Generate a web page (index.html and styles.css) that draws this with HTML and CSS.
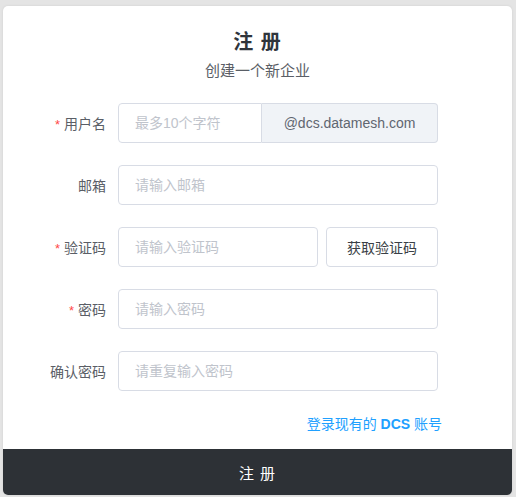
FILE: index.html
```html
<!DOCTYPE html>
<html lang="zh-CN">
<head>
<meta charset="utf-8">
<title>注册</title>
<link rel="stylesheet" href="styles.css">
</head>
<body>
<div class="card">
  <div class="head">
    <h1 class="title">注 册</h1>
    <p class="subtitle">创建一个新企业</p>
  </div>
  <form class="form">
    <div class="row">
      <label class="label"><span class="req">*</span>用户名</label>
      <div class="group">
        <input class="input input-left" placeholder="最多10个字符">
        <div class="addon">@dcs.datamesh.com</div>
      </div>
    </div>
    <div class="row">
      <label class="label">邮箱</label>
      <input class="input input-full" placeholder="请输入邮箱">
    </div>
    <div class="row">
      <label class="label"><span class="req">*</span>验证码</label>
      <div class="group gap">
        <input class="input input-code" placeholder="请输入验证码">
        <button type="button" class="btn">获取验证码</button>
      </div>
    </div>
    <div class="row">
      <label class="label"><span class="req">*</span>密码</label>
      <input class="input input-full" type="password" placeholder="请输入密码">
    </div>
    <div class="row">
      <label class="label">确认密码</label>
      <input class="input input-full" type="password" placeholder="请重复输入密码">
    </div>
    <div class="links">
      <a class="link" href="#">登录现有的 <b>DCS</b> 账号</a>
    </div>
  </form>
  <div class="footer">注 册</div>
</div>
</body>
</html>
```

FILE: styles.css
```css
* { box-sizing: border-box; }
html, body { margin: 0; padding: 0; }
body {
  background: #e4e4e4;
  font-family: "Liberation Sans", "Noto Sans CJK SC", sans-serif;
  width: 516px;
  height: 497px;
  padding: 6px 4px 2px 3px;
  overflow: hidden;
}
.card {
  background: #fff;
  width: 509px;
  height: 489px;
  border-radius: 5px;
  display: flex;
  flex-direction: column;
  overflow: hidden;
  box-shadow: 0 0 3px rgba(0,0,0,0.08);
}
.head {
  padding-top: 22px;
  text-align: center;
}
.title {
  margin: 0;
  font-size: 20px;
  line-height: 28px;
  font-weight: bold;
  color: #2f353c;
  letter-spacing: 1px;
}
.subtitle {
  margin: 4px 0 0;
  font-size: 15px;
  line-height: 22px;
  color: #5a5e66;
}
.form {
  margin: 21px 0 0;
  display: flex;
  flex-direction: column;
  gap: 22px;
}
.row {
  display: flex;
  align-items: center;
  height: 40px;
}
.label {
  width: 115px;
  padding-right: 12px;
  text-align: right;
  font-size: 14px;
  color: #5a5e66;
}
.req {
  color: #ff4949;
  margin-right: 4px;
  font-size: 13px;
}
.group {
  display: flex;
  width: 320px;
  height: 40px;
}
.group.gap { gap: 8px; }
.input {
  height: 40px;
  border: 1px solid #d8dce5;
  border-radius: 4px;
  padding: 0 16px;
  font-family: inherit;
  font-size: 14px;
  color: #1f2d3d;
  background: #fff;
  outline: none;
}
.input::placeholder { color: #c0c4cc; }
.input-full { width: 320px; }
.input-left {
  width: 144px;
  border-radius: 4px 0 0 4px;
}
.addon {
  width: 176px;
  height: 40px;
  border: 1px solid #d8dce5;
  border-left: none;
  border-radius: 0 4px 4px 0;
  background: #f0f3f7;
  color: #606670;
  font-size: 14px;
  display: flex;
  align-items: center;
  justify-content: center;
}
.input-code { width: 200px; }
.btn {
  width: 112px;
  height: 40px;
  border: 1px solid #d8dce5;
  border-radius: 4px;
  background: #fff;
  font-family: inherit;
  font-size: 14px;
  color: #3a3f46;
  padding: 0;
}
.links {
  margin-top: 1px;
  display: flex;
  justify-content: flex-end;
  padding-right: 70px;
}
.link {
  font-size: 14px;
  line-height: 20px;
  color: #20a0ff;
  text-decoration: none;
}
.link b { font-weight: bold; }
.footer {
  margin-top: auto;
  height: 46px;
  background: #2d3136;
  color: #fff;
  font-size: 15px;
  letter-spacing: 1px;
  display: flex;
  align-items: center;
  justify-content: center;
}
```
